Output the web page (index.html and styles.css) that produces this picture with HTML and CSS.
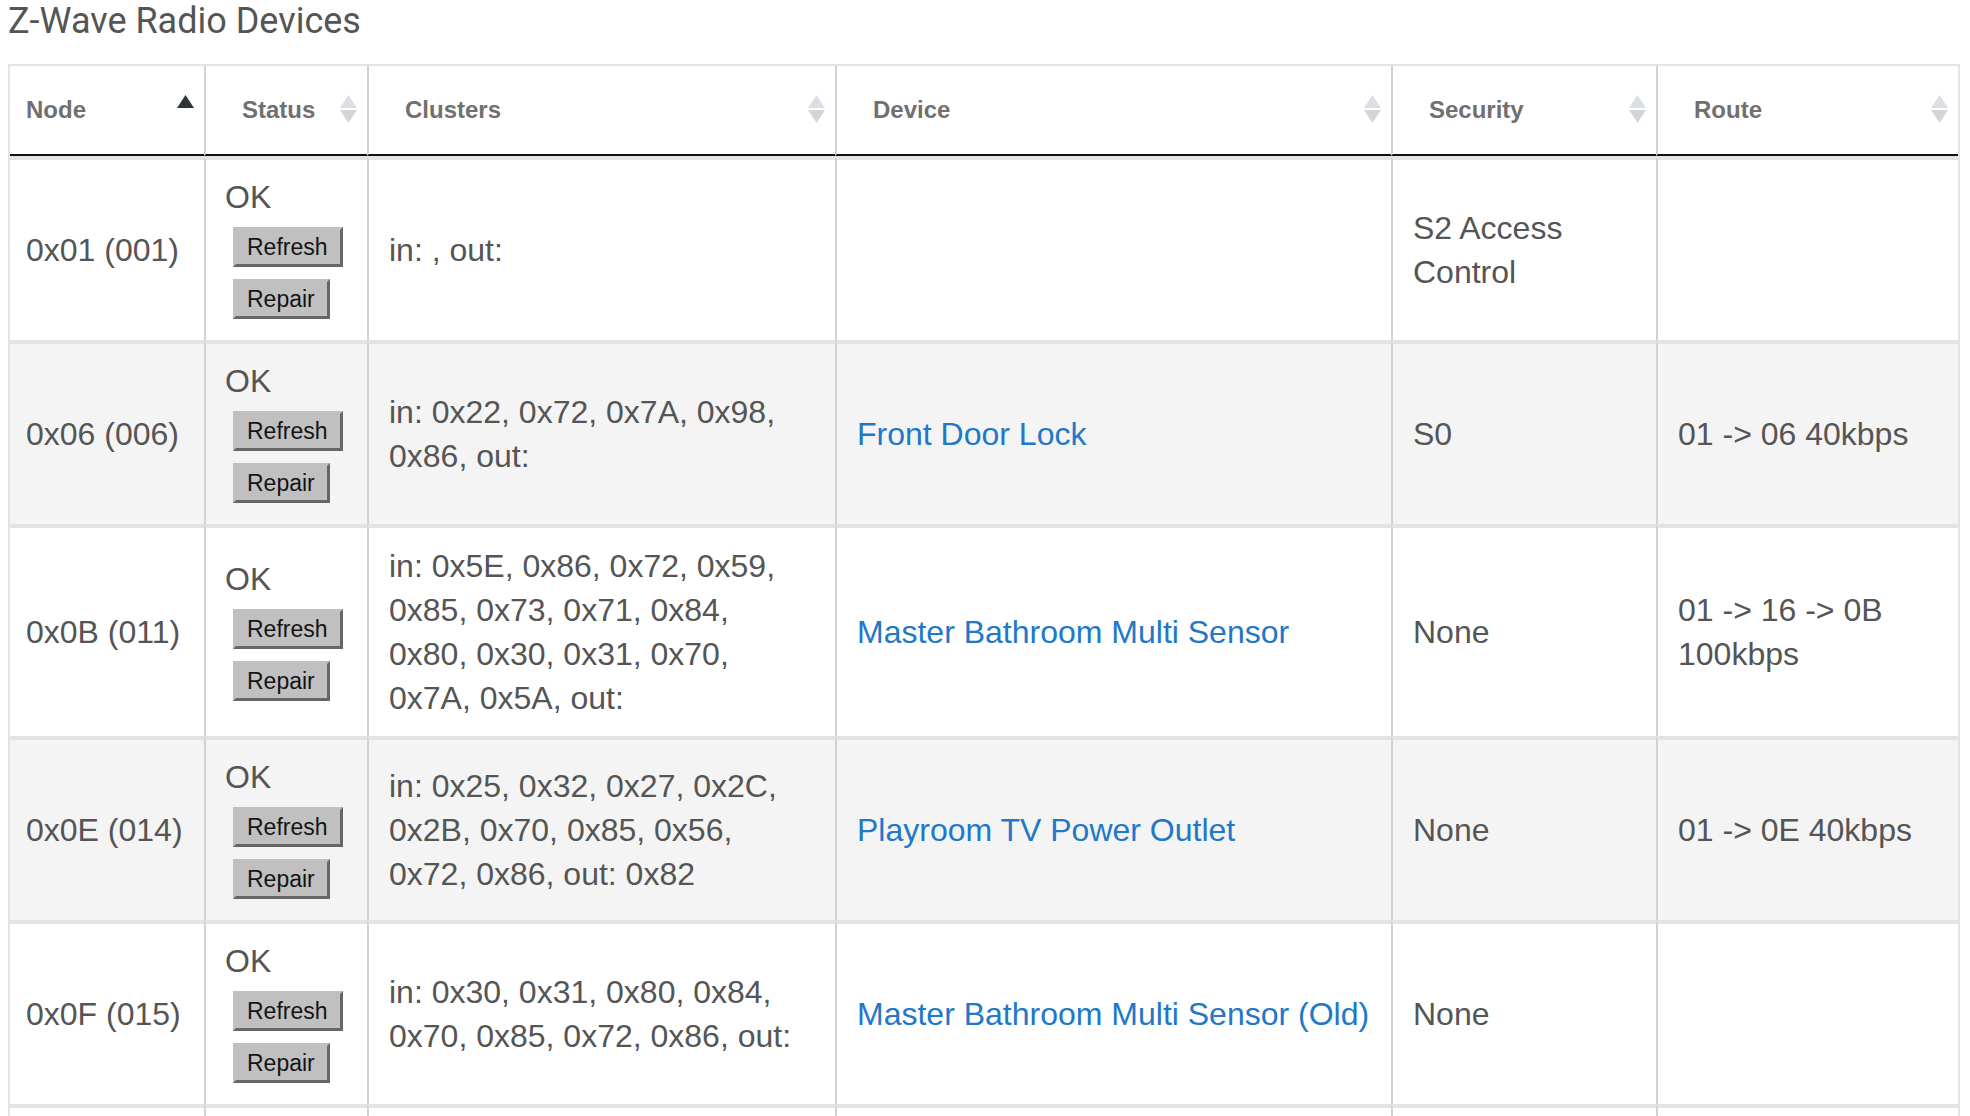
FILE: index.html
```html
<!DOCTYPE html>
<html lang="en">
<head>
<meta charset="utf-8">
<title>Z-Wave Radio Devices</title>
<link rel="stylesheet" href="styles.css">
</head>
<body>
<div class="page">
  <h1 class="title">Z-Wave Radio Devices</h1>
  <table class="devices">
    <colgroup>
      <col class="c-node">
      <col class="c-status">
      <col class="c-clusters">
      <col class="c-device">
      <col class="c-security">
      <col class="c-route">
    </colgroup>
    <thead>
      <tr>
        <th class="h-node">Node<svg class="sort-icon" width="17" height="28" viewBox="0 0 17 28"><polygon class="asc" points="8.5,0 17,13 0,13"/></svg></th>
        <th>Status<svg class="sort-icon" width="17" height="28" viewBox="0 0 17 28"><polygon class="up" points="8.5,0 17,13 0,13"/><polygon class="down" points="0,15 17,15 8.5,28"/></svg></th>
        <th>Clusters<svg class="sort-icon" width="17" height="28" viewBox="0 0 17 28"><polygon class="up" points="8.5,0 17,13 0,13"/><polygon class="down" points="0,15 17,15 8.5,28"/></svg></th>
        <th>Device<svg class="sort-icon" width="17" height="28" viewBox="0 0 17 28"><polygon class="up" points="8.5,0 17,13 0,13"/><polygon class="down" points="0,15 17,15 8.5,28"/></svg></th>
        <th>Security<svg class="sort-icon" width="17" height="28" viewBox="0 0 17 28"><polygon class="up" points="8.5,0 17,13 0,13"/><polygon class="down" points="0,15 17,15 8.5,28"/></svg></th>
        <th>Route<svg class="sort-icon" width="17" height="28" viewBox="0 0 17 28"><polygon class="up" points="8.5,0 17,13 0,13"/><polygon class="down" points="0,15 17,15 8.5,28"/></svg></th>
      </tr>
    </thead>
    <tbody>
      <tr>
        <td class="node">0x01 (001)</td>
        <td class="status"><div class="ok">OK</div><button class="btn">Refresh</button><button class="btn btn-last">Repair</button></td>
        <td class="clusters">in: , out:</td>
        <td></td>
        <td>S2 Access Control</td>
        <td></td>
      </tr>
      <tr class="alt">
        <td class="node">0x06 (006)</td>
        <td class="status"><div class="ok">OK</div><button class="btn">Refresh</button><button class="btn btn-last">Repair</button></td>
        <td class="clusters">in: 0x22, 0x72, 0x7A, 0x98, 0x86, out:</td>
        <td><a class="dev-link" href="#">Front Door Lock</a></td>
        <td>S0</td>
        <td>01 -&gt; 06 40kbps</td>
      </tr>
      <tr>
        <td class="node">0x0B (011)</td>
        <td class="status"><div class="ok">OK</div><button class="btn">Refresh</button><button class="btn btn-last">Repair</button></td>
        <td class="clusters">in: 0x5E, 0x86, 0x72, 0x59, 0x85, 0x73, 0x71, 0x84, 0x80, 0x30, 0x31, 0x70, 0x7A, 0x5A, out:</td>
        <td><a class="dev-link" href="#">Master Bathroom Multi Sensor</a></td>
        <td>None</td>
        <td>01 -&gt; 16 -&gt; 0B 100kbps</td>
      </tr>
      <tr class="alt">
        <td class="node">0x0E (014)</td>
        <td class="status"><div class="ok">OK</div><button class="btn">Refresh</button><button class="btn btn-last">Repair</button></td>
        <td class="clusters">in: 0x25, 0x32, 0x27, 0x2C, 0x2B, 0x70, 0x85, 0x56, 0x72, 0x86, out: 0x82</td>
        <td><a class="dev-link" href="#">Playroom TV Power Outlet</a></td>
        <td>None</td>
        <td>01 -&gt; 0E 40kbps</td>
      </tr>
      <tr>
        <td class="node">0x0F (015)</td>
        <td class="status"><div class="ok">OK</div><button class="btn">Refresh</button><button class="btn btn-last">Repair</button></td>
        <td class="clusters">in: 0x30, 0x31, 0x80, 0x84, 0x70, 0x85, 0x72, 0x86, out:</td>
        <td><a class="dev-link" href="#">Master Bathroom Multi Sensor (Old)</a></td>
        <td>None</td>
        <td></td>
      </tr>
      <tr class="more">
        <td class="node"></td>
        <td></td>
        <td></td>
        <td></td>
        <td></td>
        <td></td>
      </tr>
    </tbody>
  </table>
</div>
</body>
</html>
```

FILE: styles.css
```css
html, body {
  margin: 0;
  padding: 0;
  background: #ffffff;
}

.page {
  padding: 0 10px 0 8px;
}

.title {
  margin: 3px 0 25px 0;
  font-family: Roboto, "Liberation Sans", sans-serif;
  font-size: 36px;
  line-height: 36px;
  font-weight: 400;
  color: #555555;
}

.devices {
  width: 1952px;
  table-layout: fixed;
  border-collapse: separate;
  border-spacing: 0;
  border: 2px solid #e3e3e3;
  font-family: "Liberation Sans", Arial, sans-serif;
  font-size: 32px;
  line-height: 44px;
  color: #555555;
}

.c-node { width: 194px; }
.c-status { width: 163px; }
.c-clusters { width: 468px; }
.c-device { width: 556px; }
.c-security { width: 265px; }
.c-route { width: 302px; }

.devices th {
  position: relative;
  text-align: left;
  font-size: 24px;
  line-height: 24px;
  font-weight: 700;
  color: #707070;
  padding: 32px 36px;
  border-bottom: 2px solid #111111;
  border-left: 2px solid #d2d2d2;
}

.devices th.h-node {
  padding-left: 16px;
  border-left: 0;
}

.sort-icon {
  position: absolute;
  right: 10px;
  top: 29px;
  display: block;
}

.sort-icon .up { fill: #dbdfe4; }
.sort-icon .down { fill: #d2d6db; }
.sort-icon .asc { fill: #30353a; }

.devices td {
  vertical-align: middle;
  padding: 16px 20px;
  border-top: 4px solid #e3e3e3;
  border-left: 2px solid #d2d2d2;
  word-wrap: break-word;
}

.devices td.node {
  border-left: 0;
  padding-left: 16px;
  padding-right: 8px;
}

.devices td.status {
  padding-top: 15px;
  padding-bottom: 17px;
  padding-left: 19px;
}

.devices td.clusters {
  padding-right: 24px;
}

.devices tr.alt td {
  background: #f4f4f4;
}

.devices tr.more td {
  height: 148px;
}

.ok {
  line-height: 44px;
}

.btn {
  display: block;
  margin: 8px 0 0 8px;
  padding: 4px 12px 4px 11px;
  font-family: "Liberation Sans", Arial, sans-serif;
  font-size: 23px;
  line-height: 26px;
  color: #141414;
  background: #c0c0c0;
  border-style: solid;
  border-width: 3px;
  border-color: #c0c0c0 #666666 #666666 #c0c0c0;
  border-radius: 0;
}

.btn-last {
  margin-top: 12px;
  margin-bottom: 4px;
}

.dev-link {
  color: #2178c8;
  text-decoration: none;
}
```
